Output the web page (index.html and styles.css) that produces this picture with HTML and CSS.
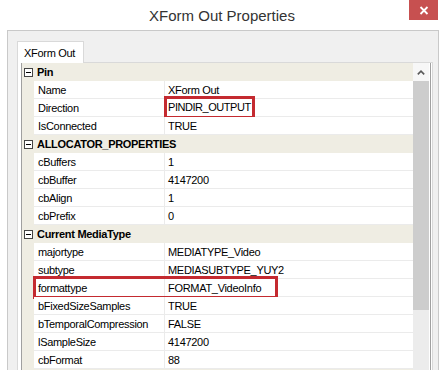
FILE: index.html
```html
<!DOCTYPE html>
<html lang="en">
<head>
    <meta charset="UTF-8">
    <title>XForm Out Properties</title>
    <link rel="stylesheet" href="styles.css">
</head>
<body>
    <header class="titlebar">
        <span></span>
        <h1 class="title">XForm Out Properties</h1>
        <button class="close-btn" aria-label="Close">
            <svg width="10" height="9" viewBox="0 0 10 9">
                <path d="M1.5 1 L8.5 8 M8.5 1 L1.5 8" stroke="#fff" stroke-width="1.8" fill="none"/>
            </svg>
        </button>
    </header>

    <div class="client">
        <div class="tabs">
            <div class="tab">XForm Out</div>
        </div>
        <div class="tab-page">
            <div class="propgrid">
                <div class="rows">
                    <div class="cat"><span class="toggle"></span>Pin</div>
                    <div class="prop"><div class="name">Name</div><div class="value">XForm Out</div></div>
                    <div class="prop"><div class="name">Direction</div><div class="value"><span class="mark">PINDIR_OUTPUT</span></div></div>
                    <div class="prop"><div class="name">IsConnected</div><div class="value">TRUE</div></div>

                    <div class="cat"><span class="toggle"></span>ALLOCATOR_PROPERTIES</div>
                    <div class="prop"><div class="name">cBuffers</div><div class="value">1</div></div>
                    <div class="prop"><div class="name">cbBuffer</div><div class="value">4147200</div></div>
                    <div class="prop"><div class="name">cbAlign</div><div class="value">1</div></div>
                    <div class="prop"><div class="name">cbPrefix</div><div class="value">0</div></div>

                    <div class="cat"><span class="toggle"></span>Current MediaType</div>
                    <div class="prop"><div class="name">majortype</div><div class="value">MEDIATYPE_Video</div></div>
                    <div class="prop"><div class="name">subtype</div><div class="value">MEDIASUBTYPE_YUY2</div></div>
                    <div class="prop"><div class="name">formattype</div><div class="value">FORMAT_VideoInfo</div><span class="row-mark"></span></div>
                    <div class="prop"><div class="name">bFixedSizeSamples</div><div class="value">TRUE</div></div>
                    <div class="prop"><div class="name">bTemporalCompression</div><div class="value">FALSE</div></div>
                    <div class="prop"><div class="name">lSampleSize</div><div class="value">4147200</div></div>
                    <div class="prop"><div class="name">cbFormat</div><div class="value">88</div></div>
                </div>
                <div class="scrollbar">
                    <div class="scroll-arrow">
                        <svg width="8" height="5" viewBox="0 0 8 5">
                            <polyline points="0.8,4.4 4,1.2 7.2,4.4" stroke="#5a5a5a" stroke-width="1.6" fill="none"/>
                        </svg>
                    </div>
                    <div class="thumb"></div>
                    <div class="track"></div>
                </div>
            </div>
        </div>
    </div>
</body>
</html>
```

FILE: styles.css
```css
* {
    box-sizing: border-box;
}

:root {
    --beige: #efede3;
    --grid-line: #ebebeb;
    --mark-red: #c42a30;
}

body {
    margin: 0;
    height: 370px;
    overflow: hidden;
    background: #fff;
    font-family: "Liberation Sans", Arial, sans-serif;
    font-size: 11px;
    letter-spacing: -0.3px;
    color: #000;
}

.titlebar {
    display: grid;
    grid-template-columns: 1fr auto 1fr;
    height: 30px;
}

.title {
    margin: 0;
    font-size: 15px;
    font-weight: normal;
    line-height: 31px;
    letter-spacing: 0;
    color: #333;
}

.close-btn {
    justify-self: end;
    width: 29px;
    height: 20px;
    margin-right: 6px;
    padding: 0;
    border: none;
    background: #c75050;
    display: flex;
    align-items: center;
    justify-content: center;
}

.client {
    height: 340px;
    margin: 0 5px 0 7px;
    padding: 10px 5px 0 9px;
    border: 1px solid #c9c9c9;
    border-bottom: none;
    background: #f0f0f0;
}

.tabs {
    display: flex;
}

.tab {
    position: relative;
    z-index: 1;
    width: 67px;
    height: 22px;
    margin-bottom: -1px;
    padding-left: 6px;
    line-height: 22px;
    background: #fff;
    border: 1px solid #d9d9d9;
    border-bottom: none;
}

.tab-page {
    height: 320px;
    padding: 0 1px 0 3px;
    background: #fff;
    border: 1px solid #d9d9d9;
    border-bottom: none;
}

.propgrid {
    display: flex;
    height: 100%;
    border-left: 1px solid #a0a0a0;
    border-right: 1px solid #a0a0a0;
}

.rows {
    flex: 1;
    background: var(--beige);
}

.cat {
    display: flex;
    align-items: center;
    gap: 4px;
    height: 18px;
    padding-left: 2px;
    font-weight: bold;
}

.toggle {
    position: relative;
    width: 9px;
    height: 9px;
    border: 1px solid #444;
    background: #fff;
}

.toggle::after {
    content: "";
    position: absolute;
    left: 1px;
    top: 3px;
    width: 5px;
    height: 1px;
    background: #000;
}

.prop {
    position: relative;
    display: flex;
    height: 18px;
    padding-left: 12px;
    line-height: 18px;
}

.name {
    width: 130px;
    padding-left: 4px;
    background: #fff;
    border-bottom: 1px solid var(--grid-line);
    white-space: nowrap;
}

.value {
    flex: 1;
    padding-left: 3px;
    background: #fff;
    border-left: 1px solid var(--grid-line);
    border-bottom: 1px solid var(--grid-line);
    white-space: nowrap;
}

.mark {
    display: inline-block;
    margin-left: -1px;
    padding: 0 1px;
    line-height: 17px;
    letter-spacing: -0.45px;
    vertical-align: top;
    outline: 3px solid var(--mark-red);
}

.row-mark {
    position: absolute;
    left: 11px;
    top: -3px;
    width: 245px;
    height: 23px;
    border: 3px solid var(--mark-red);
    pointer-events: none;
}

.scrollbar {
    display: flex;
    flex-direction: column;
    width: 17px;
    padding-right: 1px;
    background: #fff;
}

.scroll-arrow {
    height: 18px;
    display: flex;
    align-items: center;
    justify-content: center;
    background: #f7f7f7;
}

.thumb {
    height: 229px;
    background: #cdcdcd;
}

.track {
    flex: 1;
    background: #ececec;
}
```
